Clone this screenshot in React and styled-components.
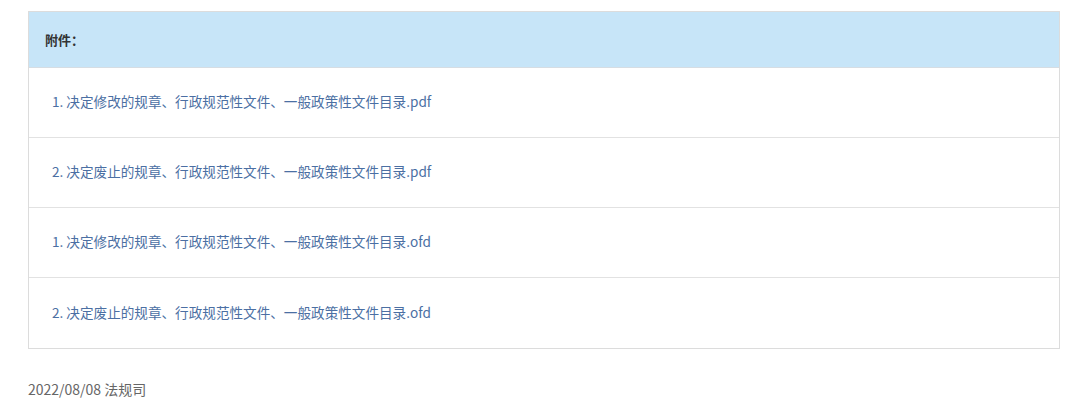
import React from "react";
import styled, { createGlobalStyle } from "styled-components";

const GlobalStyle = createGlobalStyle`
  html, body {
    margin: 0;
    padding: 0;
    background: #ffffff;
    font-family: "Microsoft YaHei", "Noto Sans CJK SC", "Noto Sans", sans-serif;
  }
`;

const files = [
  "1. 决定修改的规章、行政规范性文件、一般政策性文件目录.pdf",
  "2. 决定废止的规章、行政规范性文件、一般政策性文件目录.pdf",
  "1. 决定修改的规章、行政规范性文件、一般政策性文件目录.ofd",
  "2. 决定废止的规章、行政规范性文件、一般政策性文件目录.ofd",
];

export default function App() {
  return (
    <Page>
      <GlobalStyle />
      <AttachTable>
        <Head>附件：</Head>
        {files.map((name, i) => (
          <Row key={i}>
            <FileLink href="#">{name}</FileLink>
          </Row>
        ))}
      </AttachTable>
      <Meta>2022/08/08 法规司</Meta>
    </Page>
  );
}

const Page = styled.div`
  padding: 11px 20px 0 28px;
  width: 1032px;
`;

const AttachTable = styled.div`
  display: flex;
  flex-direction: column;
  border: 1px solid #dcdcdc;
`;

const Head = styled.div`
  height: 54px;
  display: flex;
  align-items: center;
  padding-left: 16px;
  padding-bottom: 1px;
  background: #c7e5f8;
  border-bottom: 1px solid #d6dde3;
  font-size: 13px;
  font-weight: bold;
  color: #333;
`;

const Row = styled.div`
  height: 66px;
  display: flex;
  align-items: center;
  padding-left: 23px;
  padding-bottom: 3px;
  border-bottom: 1px solid #e2e2e2;
  &:last-child {
    border-bottom: none;
    height: 67px;
  }
`;

const FileLink = styled.a`
  font-size: 13.6px;
  color: #4b6fa3;
  text-decoration: none;
`;

const Meta = styled.div`
  margin-top: 30px;
  font-size: 14px;
  color: #666;
`;
